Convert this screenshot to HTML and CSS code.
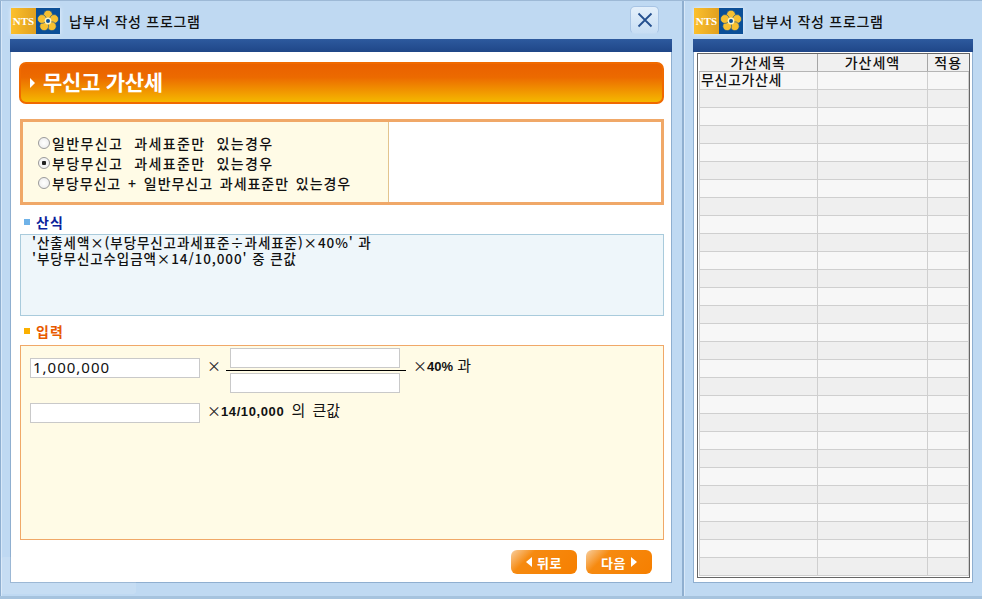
FILE: index.html
```html
<!DOCTYPE html>
<html lang="ko">
<head>
<meta charset="utf-8">
<title>납부서 작성 프로그램</title>
<link rel="stylesheet" href="styles.css">
</head>
<body>
<div class="app">
  <section class="win win-main">
    <header class="head">
      <div class="logo"><span class="logo-nts">NTS</span><span class="logo-mark"><svg width="24" height="24" viewBox="-12 -12 24 24"><g fill="#f7c030" stroke="#0b4f97" stroke-width=".6"><circle cx="0" cy="-6.4" r="4.4"/><circle cx="6.1" cy="-2" r="4.4"/><circle cx="3.8" cy="5.2" r="4.4"/><circle cx="-3.8" cy="5.2" r="4.4"/><circle cx="-6.1" cy="-2" r="4.4"/></g><circle r="3.4" fill="#fdf3c0"/><circle r="2" fill="#0b4f97"/></svg></span></div>
      <h1 class="app-title">납부서 작성 프로그램</h1>
      <button class="close" aria-label="닫기"><svg width="16" height="16" viewBox="0 0 16 16"><path d="M1.5 1.5 14.5 14.5M14.5 1.5 1.5 14.5" stroke="#25508f" stroke-width="1.8" fill="none"/></svg></button>
    </header>
    <div class="navbar"></div>
    <div class="panel panel-main">
      <div class="banner"><span class="banner-arrow"></span><h2 class="banner-title">무신고 가산세</h2></div>

      <div class="options">
        <div class="options-list">
          <label class="opt"><input class="radio" type="radio" name="k"><span>일반무신고 과세표준만 있는경우</span></label>
          <label class="opt"><input class="radio" type="radio" name="k" checked><span>부당무신고 과세표준만 있는경우</span></label>
          <label class="opt opt-tight"><input class="radio" type="radio" name="k"><span>부당무신고 + 일반무신고 과세표준만 있는경우</span></label>
        </div>
        <div class="options-side"></div>
      </div>

      <h3 class="label label-blue"><i class="bullet bullet-blue"></i>산식</h3>
      <div class="formula">
        <p>'산출세액×(부당무신고과세표준÷과세표준)×40%' 과</p>
        <p>'부당무신고수입금액×14/10,000' 중 큰값</p>
      </div>

      <h3 class="label label-orange"><i class="bullet bullet-orange"></i>입력</h3>
      <div class="entry">
        <div class="entry-row">
          <input class="field field-value" value="1,000,000">
          <span class="times">×</span>
          <div class="fraction">
            <input class="field">
            <div class="fraction-line"></div>
            <input class="field">
          </div>
          <span class="tail"><span class="times times-tight">×</span><b>40%</b> 과</span>
        </div>
        <div class="entry-row entry-row-2">
          <input class="field">
          <span class="tail"><span class="times times-tight">×</span><b>14/10,000</b> 의 큰값</span>
        </div>
      </div>

      <div class="actions">
        <button class="btn"><i class="tri tri-left"></i>뒤로</button>
        <button class="btn"><span>다음</span><i class="tri tri-right"></i></button>
      </div>
    </div>
    <div class="ghost"></div>
  </section>

  <div class="divider"></div>

  <section class="win win-side">
    <header class="head">
      <div class="logo"><span class="logo-nts">NTS</span><span class="logo-mark"><svg width="24" height="24" viewBox="-12 -12 24 24"><g fill="#f7c030" stroke="#0b4f97" stroke-width=".6"><circle cx="0" cy="-6.4" r="4.4"/><circle cx="6.1" cy="-2" r="4.4"/><circle cx="3.8" cy="5.2" r="4.4"/><circle cx="-3.8" cy="5.2" r="4.4"/><circle cx="-6.1" cy="-2" r="4.4"/></g><circle r="3.4" fill="#fdf3c0"/><circle r="2" fill="#0b4f97"/></svg></span></div>
      <h1 class="app-title">납부서 작성 프로그램</h1>
    </header>
    <div class="navbar"></div>
    <div class="panel panel-side">
      <div class="grid-frame">
        <table class="grid">
          <colgroup><col class="c1"><col class="c2"><col class="c3"></colgroup>
          <thead><tr><th>가산세목</th><th>가산세액</th><th>적용</th></tr></thead>
          <tbody>
            <tr><td class="name">무신고가산세</td><td></td><td></td></tr>
            <tr><td></td><td></td><td></td></tr><tr><td></td><td></td><td></td></tr><tr><td></td><td></td><td></td></tr>
            <tr><td></td><td></td><td></td></tr><tr><td></td><td></td><td></td></tr><tr><td></td><td></td><td></td></tr>
            <tr><td></td><td></td><td></td></tr><tr><td></td><td></td><td></td></tr><tr><td></td><td></td><td></td></tr>
            <tr><td></td><td></td><td></td></tr><tr><td></td><td></td><td></td></tr><tr><td></td><td></td><td></td></tr>
            <tr><td></td><td></td><td></td></tr><tr><td></td><td></td><td></td></tr><tr><td></td><td></td><td></td></tr>
            <tr><td></td><td></td><td></td></tr><tr><td></td><td></td><td></td></tr><tr><td></td><td></td><td></td></tr>
            <tr><td></td><td></td><td></td></tr><tr><td></td><td></td><td></td></tr><tr><td></td><td></td><td></td></tr>
            <tr><td></td><td></td><td></td></tr><tr><td></td><td></td><td></td></tr><tr><td></td><td></td><td></td></tr>
            <tr><td></td><td></td><td></td></tr><tr><td></td><td></td><td></td></tr><tr><td></td><td></td><td></td></tr>
          </tbody>
        </table>
      </div>
    </div>
  </section>
</div>
</body>
</html>
```
FILE: styles.css
```css
* { box-sizing: border-box; }
html, body { margin: 0; padding: 0; height: 100%; overflow: hidden; }
body { font-family: "Noto Sans CJK KR", "Noto Sans", sans-serif; color: #111; background: #bfd9f2; font-size: 13px; }
h1, h2, h3, p { margin: 0; }
i { display: block; }

.app { display: flex; width: 982px; height: 599px; border-top: 1px solid #9db9d6; border-bottom: 3px solid #a6c3de; }
.win { display: flex; flex-direction: column; position: relative; background: #bfd9f2; }
.win-main { width: 682px; padding: 0 10px 0 9px; border-left: 1px solid #8fafd0; box-shadow: inset 1px 0 0 #d8e8f8; }
.win-side { width: 298px; padding: 0 9px; box-shadow: inset 1px 0 0 #d8e8f8; }
.divider { width: 2px; background: #8fafd0; }

.head { height: 38px; display: flex; align-items: center; gap: 9px; padding-left: 1px; flex: none; }
.logo { width: 49px; height: 26px; display: flex; box-shadow: 0 0 4px #e8f2fc; margin-top: 1px; }
.logo-nts { width: 25px; background: linear-gradient(90deg, #fcc02c, #e0a020); color: #fff; font: bold 11px "Liberation Serif", serif; line-height: 26px; text-align: center; }
.logo-mark { width: 24px; background: #0b4f97; display: flex; align-items: center; justify-content: center; }
.app-title { font-size: 14px; font-weight: 500; letter-spacing: .72px; color: #111; margin-top: 1px; }
.close { margin-left: auto; margin-right: 13px; width: 29px; height: 28px; border: 1px solid #a8c4e4; border-bottom-color: #c4dbf2; border-radius: 5px; background: linear-gradient(#e4f0fb, #c8def4); padding: 0; display: flex; align-items: center; justify-content: center; }

.navbar { height: 13px; flex: none; background: linear-gradient(#2d5a9e, #1f4688); }
.panel { background: #fff; border: 1px solid #8fafd0; border-top: 0; flex: none; height: 531px; }
.panel-main { padding: 10px 7px 0 8px; }
.panel-side { padding: 1px 2px 0 3px; }

.banner { height: 42px; border: 2px solid #f06a00; border-radius: 7px; background: linear-gradient(#ea6100 0%, #ec6a00 35%, #f5b800 100%); display: flex; align-items: center; gap: 8px; padding-left: 9px; }
.banner-arrow { width: 0; height: 0; border-left: 5px solid #fff; border-top: 5px solid transparent; border-bottom: 5px solid transparent; }
.banner-title { color: #fff; font-size: 21px; font-weight: 700; letter-spacing: -.3px; line-height: 1; margin-top: -3px; }

.options { margin: 15px 0 0 1px; height: 86px; border: 3px solid #f0a868; display: flex; }
.options-list { width: 366px; background: #fffbe6; border-right: 1px solid #e3c48e; padding: 11px 0 0 15px; }
.options-side { flex: 1; }
.opt { display: flex; align-items: center; gap: 2px; height: 20px; font-size: 14px; font-weight: 500; letter-spacing: 1.4px; word-spacing: 5.5px; white-space: nowrap; }
.opt-tight { letter-spacing: .95px; word-spacing: 2px; }
.radio { appearance: none; margin: 0; width: 12px; height: 12px; border-radius: 50%; border: 1px solid #9a9a9a; background: radial-gradient(#fff, #e9e9e9); flex: none; }
.radio:checked { background: radial-gradient(circle, #222 0 2px, #f4f4f4 2.5px); }

.label { display: flex; align-items: center; gap: 6px; font-size: 14px; font-weight: 700; letter-spacing: 1px; height: 18px; padding-left: 4px; margin-left: 1px; }
.label-blue { color: #0a1f9c; margin-top: 8px; margin-bottom: 3px; }
.label-orange { color: #e85a00; margin-top: 6px; margin-bottom: 5px; }
.bullet { width: 6px; height: 6px; }
.bullet-blue { background: #6fb2e8; }
.bullet-orange { background: #fbb000; }

.formula { margin-left: 1px; height: 82px; border: 1px solid #a9cbdc; background: #eef6fa; padding: 0 0 0 11px; line-height: 16px; font-size: 13.5px; font-weight: 500; letter-spacing: .9px; }
.formula p:first-child { margin-top: -1px; }

.entry { margin-left: 1px; height: 195px; border: 1px solid #f0a868; background: #fffbe6; padding: 2px 0 0 9px; }
.entry-row { display: flex; align-items: flex-start; }
.entry-row-2 { margin-top: 10px; }
.field { width: 170px; height: 20px; border: 1px solid #c9c9c9; background: #fff; padding: 0 2px; font: 15px "Noto Sans", sans-serif; letter-spacing: 1px; color: #111; outline: 0; display: block; }
.field-value { margin-top: 10px; padding-bottom: 2px; }
.times { font-size: 14px; line-height: 18px; margin: 8px 0 0 7px; width: 23px; color: #222; }
.times-tight { margin: 0; width: auto; }
.fraction { width: 180px; display: flex; flex-direction: column; align-items: center; margin-left: -4px; }
.fraction .field { margin-left: -2px; }
.fraction-line { width: 180px; height: 1px; background: #000; margin: 2px 0; }
.tail { font-size: 15px; line-height: 18px; margin: 8px 0 0 7px; white-space: nowrap; }
.entry-row-2 .tail { margin-top: -2px; margin-left: 7px; word-spacing: 3px; }
.tail b { font-family: "Liberation Sans", sans-serif; font-size: 13px; }
.entry-row-2 .tail b { letter-spacing: .6px; word-spacing: 0; }

.actions { display: flex; justify-content: flex-end; gap: 9px; margin-top: 10px; padding-right: 12px; }
.btn { width: 66px; height: 24px; border: 0; border-radius: 6px; background: linear-gradient(135deg, #f8cfa0 0%, #f68a10 28%, #f67f00 100%); color: #fff; font: 700 13px "Noto Sans CJK KR", sans-serif; display: flex; align-items: center; justify-content: center; gap: 5px; padding: 0; letter-spacing: .5px; }
.tri { width: 0; height: 0; border-top: 5px solid transparent; border-bottom: 5px solid transparent; }
.tri-left { border-right: 6px solid #fff; }
.tri-right { border-left: 6px solid #fff; }

.ghost { position: absolute; left: 0; top: 556px; width: 135px; height: 37px; background: rgba(255,255,255,.12); border-radius: 3px; }

.grid-frame { border: 1px solid #666; height: 525px; padding: 0 0 0 1px; overflow: hidden; }
.grid { border-collapse: collapse; table-layout: fixed; width: 269px; }
.c1 { width: 118px; } .c2 { width: 110px; } .c3 { width: 41px; }
.grid th { height: 17px; padding: 0; background: #f0f0f0; font-weight: 500; font-size: 14px; letter-spacing: 1px; line-height: 15px; border-bottom: 1px solid #b5b5b5; border-left: 1px solid #a5a5a5; }
.grid th:first-child { border-left: 0; }
.grid td { height: 18px; padding: 0; border: 1px solid #cfcfcf; background: #f7f7f7; }
.grid tr:nth-child(even) td { background: #efefef; }
.grid .name { font-size: 14px; font-weight: 500; letter-spacing: .6px; padding: 0 0 2px 1px; line-height: 15px; white-space: nowrap; }
```
